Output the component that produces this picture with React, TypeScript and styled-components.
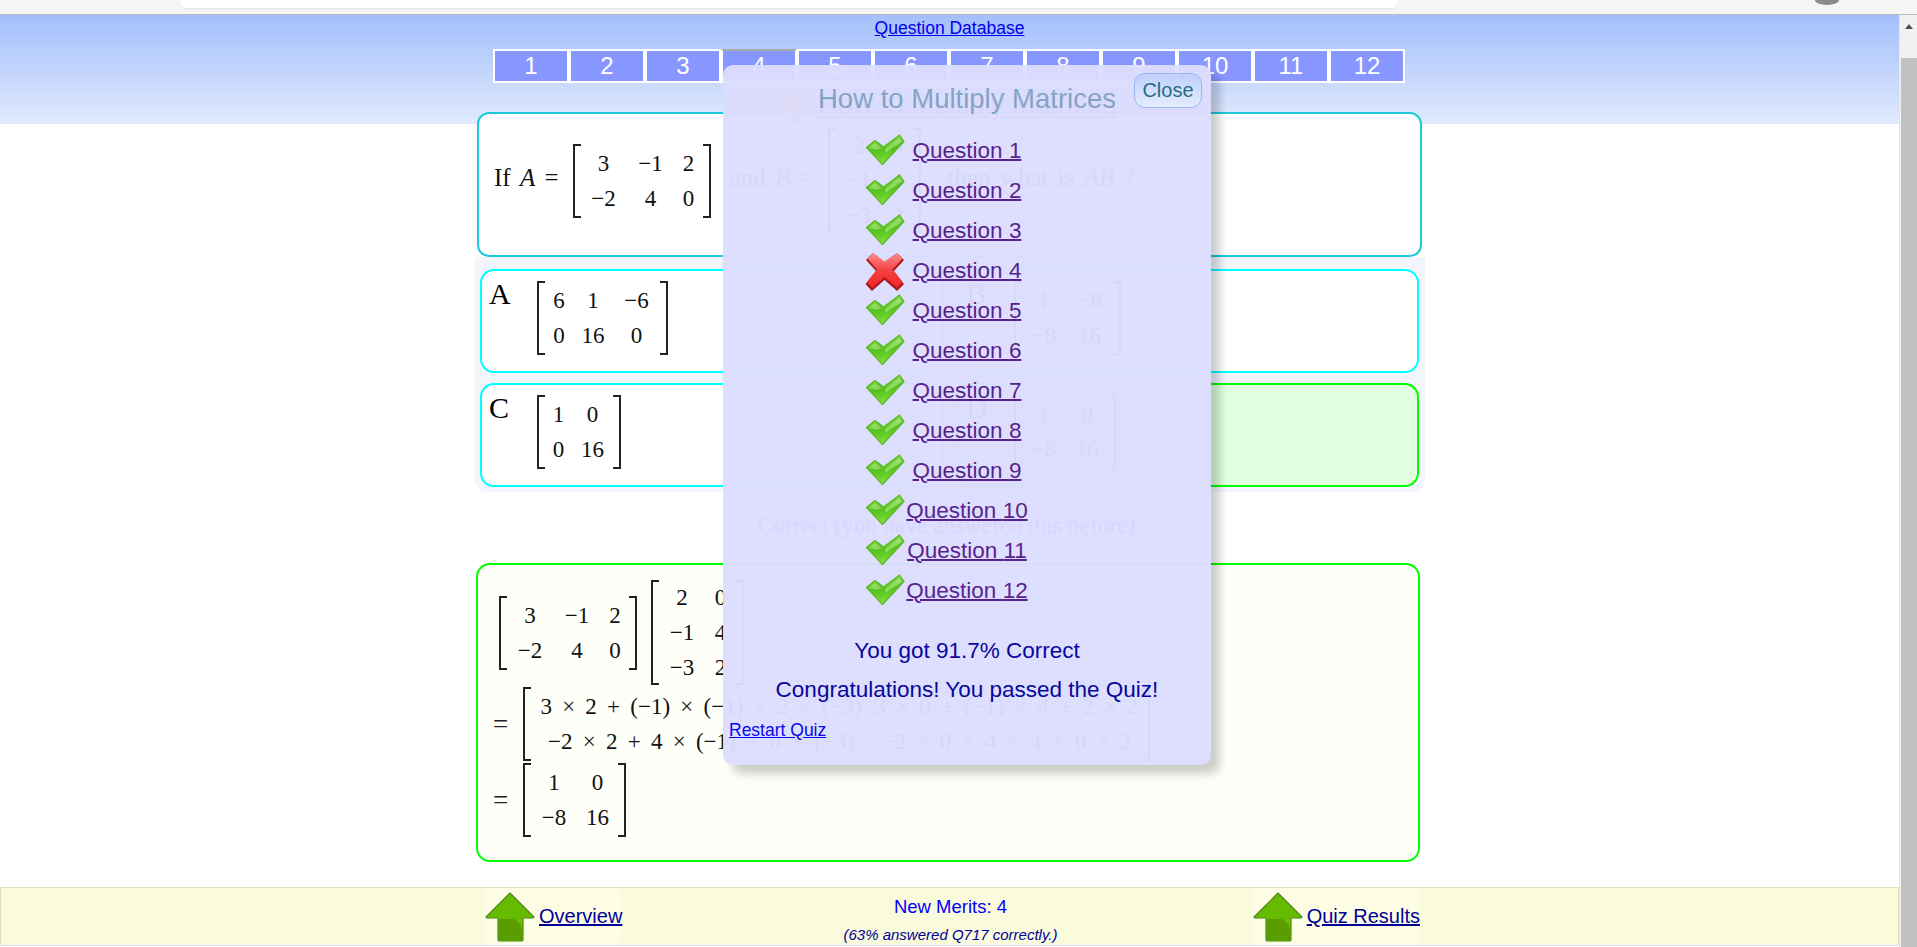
import styled, { createGlobalStyle } from 'styled-components'

const GlobalStyle = createGlobalStyle`
  html, body {
    margin: 0;
    height: 947px;
    overflow: hidden;
    background: #fff;
    font-family: 'Liberation Sans', Arial, sans-serif;
  }
`

const Page = styled.div`
  display: flex;
  flex-direction: column;
  width: 1917px;
  height: 947px;
`
const Chrome = styled.div`
  display: flex;
  align-items: flex-start;
  height: 14px;
  padding-left: 180px;
  background: #f5f5f5;
  border-bottom: 1px solid #b8b8b8;
  box-sizing: content-box;
`
const AddressBar = styled.div`
  width: 1218px;
  height: 8px;
  background: #fff;
  border-radius: 0 0 6px 6px;
  box-shadow: 0 1px 2px rgba(0, 0, 0, 0.08);
`
const Avatar = styled.div`
  width: 24px;
  height: 5px;
  margin-left: 417px;
  background: #8a8a8a;
  border-radius: 0 0 50% 50% / 0 0 100% 100%;
`
const Body = styled.div`
  display: flex;
  flex: 1;
  min-height: 0;
`
const Main = styled.main`
  position: relative;
  display: flex;
  flex-direction: column;
  width: 1899px;
  background: linear-gradient(#a3bffb, #e1eafe) no-repeat;
  background-size: 100% 109px;
`
const Scrollbar = styled.div`
  display: flex;
  flex-direction: column;
  align-items: flex-end;
  width: 18px;
  background: #f1f1f1;
  border-left: 1px solid #e6e6e6;
  box-sizing: border-box;
`
const ScrollArrow = styled.div`
  width: 0;
  height: 0;
  margin: 9px 4px 0 0;
  border-left: 4px solid transparent;
  border-right: 4px solid transparent;
  border-bottom: 5px solid #505050;
`
const ScrollThumb = styled.div`
  width: 16px;
  flex: 1;
  margin-top: 29px;
  background: #c1c1c1;
`
const Column = styled.div`
  display: flex;
  flex-direction: column;
  width: 951px;
  margin: 0 auto;
  height: 872px;
`
const DatabaseLink = styled.a`
  box-sizing: border-box;
  height: 34px;
  padding-top: 2px;
  font-size: 17.5px;
  line-height: 22px;
  text-align: center;
  color: #0000ee;
  text-decoration: underline;
`
const Tabs = styled.div`
  display: flex;
  margin-left: 19px;
  width: 912px;
`
const Tab = styled.div<{ $active?: boolean }>`
  width: 76px;
  height: 34px;
  box-sizing: border-box;
  border: 2px solid #fff;
  border-top-color: ${p => (p.$active ? '#aaaaaa' : '#fff')};
  background: #8896ff;
  color: #fff;
  font-size: 24px;
  line-height: 30px;
  text-align: center;
`
const QuizTitle = styled.div`
  position: relative;
  z-index: 1;
  display: flex;
  justify-content: center;
  gap: 11px;
  height: 29px;
  align-items: flex-end;
  font-size: 27.5px;
  line-height: 30px;
`
const TitleBulb = styled.svg`
  margin-bottom: -15px;
`
const QuizTitleLink = styled.a`
  margin-bottom: -8px;
  color: #551a8b;
  text-decoration: underline;
`
const QuestionPanel = styled.section`
  display: flex;
  align-items: center;
  gap: 14px;
  box-sizing: border-box;
  width: 945px;
  height: 145px;
  margin-left: 3px;
  padding: 14px 0 22px 15px;
  background: #fff;
  border: 2px solid #1ccadb;
  border-radius: 12px;
`
const MathText = styled.span<{ $space?: number }>`
  margin: 0 0 5px ${p => p.$space ?? 0}px;
  font-family: 'Liberation Serif', 'Times New Roman', serif;
  font-size: 25px;
  color: #111;
  white-space: nowrap;
  word-spacing: 3px;
`
const Options = styled.div`
  display: grid;
  grid-template-columns: 464px 462px;
  gap: 10px 13px;
  box-sizing: border-box;
  width: 950px;
  margin-left: 1px;
  padding: 12px 0 5px 5px;
  background: #f2f6fc;
  border-radius: 0 0 12px 12px;
`
const Option = styled.div<{ $correct?: boolean }>`
  display: flex;
  align-items: flex-start;
  box-sizing: border-box;
  height: 104px;
  padding: 10px 0 0 7px;
  background: ${p => (p.$correct ? '#e0ffe0' : '#fff')};
  border: 2px solid ${p => (p.$correct ? '#00ff00' : '#00ffff')};
  border-radius: 14px;
`
const OptionLetter = styled.div`
  width: 48px;
  font-family: 'Liberation Serif', 'Times New Roman', serif;
  font-size: 30px;
  line-height: 26px;
  color: #000;
`
const Feedback = styled.div`
  height: 71px;
  padding-top: 20px;
  box-sizing: border-box;
  font-family: 'Liberation Serif', 'Times New Roman', serif;
  font-size: 23.5px;
  line-height: 26px;
  text-align: center;
  color: #0000ff;
`
const Working = styled.section`
  display: flex;
  flex-direction: column;
  gap: 2px;
  box-sizing: border-box;
  width: 944px;
  height: 299px;
  margin-left: 2px;
  padding: 15px 0 0 15px;
  background: #fefff8;
  border: 2px solid #00ff00;
  border-radius: 14px;
`
const WorkingLine = styled.div<{ $indent?: number; $gap?: number }>`
  display: flex;
  align-items: center;
  gap: ${p => p.$gap ?? 16}px;
  margin-left: ${p => p.$indent ?? 0}px;
`
const EqualsSign = styled.span`
  width: 14px;
  font-family: 'Liberation Serif', 'Times New Roman', serif;
  font-size: 27px;
  color: #222;
`
const MatrixWrap = styled.div<{ $rows: number }>`
  display: flex;
  flex-shrink: 0;
  height: ${p => (p.$rows === 3 ? 105 : 74)}px;
`
const Bracket = styled.span<{ $side: 'left' | 'right' }>`
  width: 6px;
  flex-shrink: 0;
  border: 2px solid #222;
  border-${p => (p.$side === 'left' ? 'right' : 'left')}: 0;
`
const MatrixGrid = styled.div<{ $columns: string; $spaced?: boolean }>`
  display: grid;
  grid-template-columns: ${p => p.$columns};
  grid-auto-rows: 35px;
  align-content: center;
  word-spacing: ${p => (p.$spaced ? 4.5 : 0)}px;
`
const MatrixCell = styled.div`
  font-family: 'Liberation Serif', 'Times New Roman', serif;
  font-size: 23px;
  line-height: 36px;
  text-align: center;
  white-space: nowrap;
  color: #111;
`
const Footer = styled.footer`
  box-sizing: border-box;
  height: 59px;
  padding-left: 482px;
  background: #fafadd;
  border: 1px solid #e0dfb8;
  border-bottom-color: #cfe0f0;
`
const FooterInner = styled.div`
  display: grid;
  grid-template-columns: 1fr auto 1fr;
  width: 937px;
  height: 100%;
`
const NavBlock = styled.div<{ $end?: boolean }>`
  display: flex;
  align-items: center;
  gap: 4px;
  justify-self: ${p => (p.$end ? 'end' : 'start')};
  padding-left: 2px;
  background: #fdfde6;
  border-radius: 6px;
`
const NavLink = styled.a`
  font-size: 20px;
  color: #000099;
  text-decoration: underline;
`
const Merits = styled.div`
  display: flex;
  flex-direction: column;
  align-items: center;
  padding: 8px 2px 0 0;
`
const MeritCount = styled.div`
  font-size: 18.5px;
  line-height: 22px;
  color: #0000ff;
`
const MeritNote = styled.div`
  margin-top: 8px;
  font-size: 15px;
  line-height: 18px;
  font-style: italic;
  color: #000099;
`
const Modal = styled.div`
  position: absolute;
  top: 50px;
  left: 723px;
  z-index: 5;
  box-sizing: border-box;
  width: 488px;
  height: 700px;
  padding-top: 16px;
  background: #ddddff;
  border-radius: 10px;
  box-shadow: 9px 9px 9px rgba(0, 0, 0, 0.2);
  opacity: 0.97;
`
const ModalTitle = styled.div`
  font-size: 27.5px;
  line-height: 36px;
  text-align: center;
  color: #85a5c6;
`
const CloseButton = styled.button`
  position: absolute;
  top: 8px;
  right: 9px;
  width: 68px;
  height: 35px;
  padding: 0;
  font-family: inherit;
  font-size: 20px;
  color: #1e6a80;
  background: linear-gradient(#c0d0fb, #e6edfe);
  border: 1px solid #9ab6f5;
  border-radius: 11px;
`
const QuestionList = styled.div`
  display: flex;
  flex-direction: column;
  margin-top: 14px;
`
const QuestionRow = styled.div`
  position: relative;
  display: flex;
  justify-content: center;
  height: 40px;
  font-size: 22.5px;
  line-height: 40px;
`
const QuestionLink = styled.a`
  color: #551a8b;
  text-decoration: underline;
  text-decoration-thickness: 2px;
`
const ResultIcon = styled.svg<{ $top: number }>`
  position: absolute;
  left: 142px;
  top: ${p => p.$top}px;
`
const ResultLine = styled.div<{ $first?: boolean }>`
  margin-top: ${p => (p.$first ? 21 : 1)}px;
  font-size: 22.5px;
  line-height: 38px;
  text-align: center;
  color: #000099;
`
const RestartLink = styled.a`
  display: block;
  margin: 10px 0 0 6px;
  font-size: 17.5px;
  line-height: 22px;
  color: #0000ee;
  text-decoration: underline;
`

const CheckIcon = () => (
  <ResultIcon $top={3} width="40" height="32" viewBox="0 0 40 32">
    <defs>
      <linearGradient id="checkFill" x1="0.3" y1="0" x2="0.5" y2="1">
        <stop offset="0" stopColor="#8ee24e" />
        <stop offset="0.5" stopColor="#4fc014" />
        <stop offset="1" stopColor="#86e040" />
      </linearGradient>
    </defs>
    <path
      d="M1.5 13.5 L10 6.5 L18.5 13 L34.5 1 L39 7.5 L17.5 30.5 Z"
      fill="url(#checkFill)"
      stroke="#58b526"
      strokeWidth="1.2"
      strokeLinejoin="round"
    />
    <path d="M19.5 15.5 L34 4 L37 7.5 L21 18.5 Z" fill="#d8f7b8" opacity="0.4" />
    <path d="M4 14 L10 9 L16 14 L12 16 Z" fill="#d8f7b8" opacity="0.35" />
  </ResultIcon>
)

const CrossIcon = () => (
  <ResultIcon $top={0} width="40" height="40" viewBox="0 0 40 40">
    <defs>
      <linearGradient id="crossFill" x1="0" y1="0" x2="0" y2="1">
        <stop offset="0" stopColor="#ff8a8a" />
        <stop offset="0.5" stopColor="#f63c3c" />
        <stop offset="1" stopColor="#ee2020" />
      </linearGradient>
    </defs>
    <path
      d="M2 9 L8 3 L19.5 12 L32 3 L38 9 L28 20 L38 33 L32 39 L19.5 28 L7 39 L1.5 33 L12 20 Z"
      fill="#b01414"
      stroke="#a81010"
      strokeWidth="1.5"
      strokeLinejoin="round"
    />
    <path
      d="M2.5 7.5 L8 2 L19.5 10.5 L32 2 L37.5 7.5 L27.5 18.5 L37.5 31 L32 36.5 L19.5 26 L7.5 36.5 L2 31 L12 18.5 Z"
      fill="url(#crossFill)"
      strokeLinejoin="round"
    />
  </ResultIcon>
)

const UpArrow = () => (
  <svg width="50" height="50" viewBox="0 0 50 50">
    <path
      d="M25 1 L49 25 Q49 26 47 26 L38 26 L38 47 Q38 49 36 49 L15 49 Q13 49 13 47 L13 26 L3 26 Q1 26 1 25 Z"
      fill="#66bb00"
      stroke="#4a8a14"
      strokeWidth="1.2"
      strokeLinejoin="round"
    />
    <path d="M13.6 27 L29 27 Q36 31 37.4 39 L37.4 47 Q37.4 48.4 36 48.4 L15 48.4 Q13.6 48.4 13.6 47 Z" fill="#5a9d00" />
  </svg>
)

const Bulb = () => (
  <TitleBulb width="24" height="36" viewBox="0 0 24 36">
    <ellipse cx="12" cy="12" rx="11" ry="11" fill="#ffcc33" />
    <rect x="7" y="22" width="10" height="12" rx="3" fill="#bbbbbb" />
  </TitleBulb>
)

const Matrix = ({ rows, columns, spaced }: { rows: string[][]; columns: string; spaced?: boolean }) => (
  <MatrixWrap $rows={rows.length}>
    <Bracket $side="left" />
    <MatrixGrid $columns={columns} $spaced={spaced}>
      {rows.flat().map((cell, i) => (
        <MatrixCell key={i}>{cell}</MatrixCell>
      ))}
    </MatrixGrid>
    <Bracket $side="right" />
  </MatrixWrap>
)

const matrixA = [['3', '−1', '2'], ['−2', '4', '0']]
const matrixB = [['2', '0'], ['−1', '4'], ['−3', '2']]

const results = [true, true, true, false, true, true, true, true, true, true, true, true]

export default function App() {
  return (
    <Page>
      <GlobalStyle />
      <Chrome>
        <AddressBar />
        <Avatar />
      </Chrome>
      <Body>
        <Main>
          <Column>
            <DatabaseLink>Question Database</DatabaseLink>
            <Tabs>
              {results.map((_, i) => (
                <Tab key={i} $active={i === 3}>
                  {i + 1}
                </Tab>
              ))}
            </Tabs>
            <QuizTitle>
              <Bulb />
              <QuizTitleLink>How to Multiply Matrices</QuizTitleLink>
            </QuizTitle>
            <QuestionPanel>
              <MathText>
                If <i>A</i> =
              </MathText>
              <Matrix rows={matrixA} columns="46px 48px 28px" />
              <MathText $space={5}>
                and <i>B</i> =
              </MathText>
              <Matrix rows={matrixB} columns="46px 31px" />
              <MathText $space={13}>
                then what is <i>AB</i> ?
              </MathText>
            </QuestionPanel>
            <Options>
              <Option>
                <OptionLetter>A</OptionLetter>
                <Matrix rows={[['6', '1', '−6'], ['0', '16', '0']]} columns="28px 40px 47px" />
              </Option>
              <Option>
                <OptionLetter>B</OptionLetter>
                <Matrix rows={[['1', '−8'], ['−8', '16']]} columns="44px 47px" />
              </Option>
              <Option>
                <OptionLetter>C</OptionLetter>
                <Matrix rows={[['1', '0'], ['0', '16']]} columns="27px 41px" />
              </Option>
              <Option $correct>
                <OptionLetter>D</OptionLetter>
                <Matrix rows={[['1', '0'], ['−8', '16']]} columns="44px 42px" />
              </Option>
            </Options>
            <Feedback>Correct (you have answered this before).</Feedback>
            <Working>
              <WorkingLine $indent={6} $gap={14}>
                <Matrix rows={matrixA} columns="46px 48px 28px" />
                <Matrix rows={matrixB} columns="46px 31px" />
              </WorkingLine>
              <WorkingLine>
                <EqualsSign>=</EqualsSign>
                <Matrix
                  spaced
                  rows={[
                    ['3 × 2 + (−1) × (−1) + 2 × (−3)', '3 × 0 + (−1) × 4 + 2 × 2'],
                    ['−2 × 2 + 4 × (−1) + 0 × (−3)', '−2 × 0 + 4 × 4 + 0 × 2'],
                  ]}
                  columns="340px 271px"
                />
              </WorkingLine>
              <WorkingLine>
                <EqualsSign>=</EqualsSign>
                <Matrix rows={[['1', '0'], ['−8', '16']]} columns="46px 41px" />
              </WorkingLine>
            </Working>
          </Column>
          <Footer>
            <FooterInner>
              <NavBlock>
                <UpArrow />
                <NavLink>Overview</NavLink>
              </NavBlock>
              <Merits>
                <MeritCount>New Merits: 4</MeritCount>
                <MeritNote>(63% answered Q717 correctly.)</MeritNote>
              </Merits>
              <NavBlock $end>
                <UpArrow />
                <NavLink>Quiz Results</NavLink>
              </NavBlock>
            </FooterInner>
          </Footer>
          <Modal>
            <ModalTitle>How to Multiply Matrices</ModalTitle>
            <CloseButton>Close</CloseButton>
            <QuestionList>
              {results.map((ok, i) => (
                <QuestionRow key={i}>
                  {ok ? <CheckIcon /> : <CrossIcon />}
                  <QuestionLink>Question {i + 1}</QuestionLink>
                </QuestionRow>
              ))}
            </QuestionList>
            <ResultLine $first>You got 91.7% Correct</ResultLine>
            <ResultLine>Congratulations! You passed the Quiz!</ResultLine>
            <RestartLink>Restart Quiz</RestartLink>
          </Modal>
        </Main>
        <Scrollbar>
          <ScrollArrow />
          <ScrollThumb />
        </Scrollbar>
      </Body>
    </Page>
  )
}
